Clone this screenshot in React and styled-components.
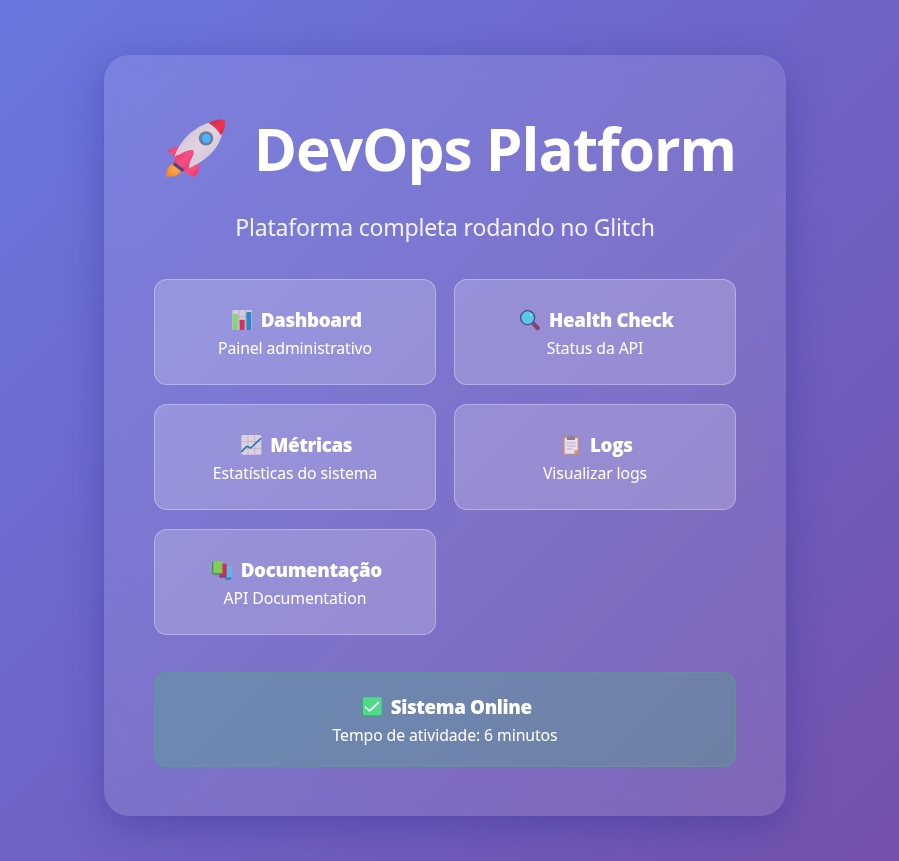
import React from 'react';
import styled, { createGlobalStyle } from 'styled-components';

const GlobalStyle = createGlobalStyle`
  * { box-sizing: border-box; margin: 0; padding: 0; }
  body {
    font-family: "Noto Sans", "Open Sans", sans-serif;
    color: #fff;
    overflow: hidden;
  }
`;

const Page = styled.div`
  min-height: 861px;
  padding: 55px 9px 45px 0;
  display: flex;
  justify-content: center;
  align-items: flex-start;
  background: linear-gradient(135deg, #6a77e0 0%, #7451ac 100%);
`;

const Panel = styled.main`
  width: 682px;
  height: 761px;
  padding: 50px;
  border-radius: 25px;
  background: rgba(255, 255, 255, 0.1);
  backdrop-filter: blur(12px);
  box-shadow: 0 10px 40px rgba(31, 38, 135, 0.37);
`;

const Heading = styled.h1`
  display: flex;
  align-items: center;
  justify-content: flex-end;
  gap: 27.5px;
  height: 86px;
  font-family: "Open Sans", sans-serif;
  font-size: 58.5px;
  line-height: 86px;
  font-weight: 750;
  letter-spacing: -1px;
  white-space: nowrap;
`;

const RocketSvg = styled.svg`
  width: 60px;
  height: 60px;
`;

const Subtitle = styled.p`
  margin: 20px 0 35px;
  font-size: 23px;
  line-height: 33px;
  letter-spacing: -0.2px;
  text-align: center;
  opacity: 0.9;
`;

const Grid = styled.nav`
  display: grid;
  grid-template-columns: 1fr 1fr;
  grid-auto-rows: 106px;
  gap: 19px 18px;
`;

const Tile = styled.a`
  padding-top: 27px;
  border-radius: 13px;
  background: rgba(255, 255, 255, 0.2);
  box-shadow: inset 0 0 0 1px rgba(255, 255, 255, 0.3);
  text-align: center;
`;

const Status = styled.section`
  height: 95px;
  margin-top: 37px;
  padding-top: 21px;
  border-radius: 13px;
  background: rgba(72, 187, 120, 0.3);
  box-shadow: inset 0 0 0 1px rgba(60, 180, 110, 0.5);
  text-align: center;
`;

const Label = styled.strong`
  display: flex;
  justify-content: center;
  align-items: center;
  gap: 7px;
  padding-left: 1.5px;
  font-family: "Open Sans", sans-serif;
  font-size: 18.75px;
  line-height: 28px;
  font-weight: 800;
  letter-spacing: -0.35px;
`;

const Detail = styled.span`
  display: block;
  font-size: 15.8px;
  line-height: 28px;
  letter-spacing: -0.11px;
`;

const IconSvg = styled.svg`
  width: 24px;
  height: 24px;
  flex: none;
`;

const Rocket = () => (
  <RocketSvg viewBox="48 40 180 180">
    <defs>
      <linearGradient id="hull" x1="0" y1="0" x2="1" y2="1">
        <stop offset="0" stopColor="#c8bdcc" />
        <stop offset=".5" stopColor="#e0d4e2" />
        <stop offset="1" stopColor="#cdbfd4" />
      </linearGradient>
      <linearGradient id="fin" x1="0" y1="0" x2="1" y2="1">
        <stop offset="0" stopColor="#e03a63" />
        <stop offset=".5" stopColor="#f54f85" />
        <stop offset="1" stopColor="#ee2f5f" />
      </linearGradient>
      <linearGradient id="tip" x1="0" y1="0" x2="1" y2="1">
        <stop offset="0" stopColor="#c92745" />
        <stop offset=".6" stopColor="#f03650" />
        <stop offset="1" stopColor="#d42040" />
      </linearGradient>
      <radialGradient id="flame">
        <stop offset="0" stopColor="#ffae4b" />
        <stop offset="1" stopColor="#ed8733" />
      </radialGradient>
    </defs>
    <path d="M70 176 C57 180 47 197 49 216 C54 219 59 217 62 213 C66 218 72 217 75 213 C88 211 96 202 96 192 Z" fill="url(#flame)" />
    <path d="M75 169 L106 192 L97 202 L69 180 Z" fill="#4b4384" />
    <path d="M90 124 C70 127 57 134 53 141 C60 148 70 151 76 157 Z" fill="url(#fin)" />
    <path d="M144 174 C153 186 145 204 134 217 C122 213 109 206 99 199 Z" fill="url(#fin)" />
    <path d="M177 54 C134 66 92 105 76 149 L74 165 L118 190 C164 170 207 134 216 88 Z" fill="url(#hull)" />
    <path d="M176 55 C194 45 215 42 225 47 C228 60 223 78 213 92 C204 77 192 63 176 55 Z" fill="url(#tip)" />
    <path d="M72 171 C73 160 77 149 86 151 C101 142 119 133 130 137 C136 148 120 166 118 180 C117 188 112 195 105 196 Z" fill="url(#fin)" />
    <circle cx="168" cy="101" r="21.5" fill="#777889" />
    <circle cx="168" cy="101" r="16" fill="#3d8fe9" />
    <circle cx="169" cy="101" r="13" fill="#55b1ff" />
  </RocketSvg>
);

const BarChart = () => (
  <IconSvg viewBox="27 24 72 72">
    <rect x="34" y="30" width="59" height="60" rx="4" fill="#d5cad9" />
    <path d="M34 50H93M34 70H93M54 30V90M74 30V90" stroke="#b1a3bd" strokeWidth="2" />
    <rect x="36" y="42" width="14" height="48" rx="2" fill="#7fda70" />
    <rect x="56" y="59" width="15" height="31" rx="2" fill="#d0315f" />
    <rect x="76" y="36" width="15" height="54" rx="2" fill="#2b87c8" />
  </IconSvg>
);

const Magnifier = () => (
  <IconSvg viewBox="26 24 72 72">
    <path d="M66 66L75 74" stroke="#564577" strokeWidth="7" />
    <path d="M74 73L85 84" stroke="#86436f" strokeWidth="13" strokeLinecap="round" />
    <circle cx="55" cy="53" r="21" fill="#58c9e5" stroke="#514b80" strokeWidth="4" />
    <circle cx="65" cy="44" r="3" fill="#a4e8f4" />
  </IconSvg>
);

const LineChart = () => (
  <IconSvg viewBox="120 24 72 72">
    <rect x="127" y="30" width="60" height="59" rx="4" fill="#ddd2df" />
    <path d="M127 50H187M127 70H187M147 30V89M167 30V89" stroke="#b5a8c0" strokeWidth="2" />
    <path d="M128 80L143 64L155 69L185 41" fill="none" stroke="#2978b4" strokeWidth="5" strokeLinejoin="round" strokeLinecap="round" />
  </IconSvg>
);

const Clipboard = () => (
  <IconSvg viewBox="72 24 72 72">
    <rect x="84" y="33" width="48" height="57" rx="4" fill="#c98a78" />
    <path d="M89 39H128V75L118 86H89Z" fill="#e9dfec" />
    <path d="M128 75L118 86V75Z" fill="#c7a5af" />
    <path d="M118 87L129 75V87Z" fill="#e58a4b" />
    <path d="M95 54H122M95 63H122M95 72H113" stroke="#b9adc7" strokeWidth="3" />
    <path d="M96 35H103Q108 25 113 35H120V45H96Z" fill="#88809b" />
  </IconSvg>
);

const Books = () => (
  <IconSvg viewBox="30 24 72 72">
    <path d="M78 48H96V86H78Z" fill="#5cb9e6" />
    <path d="M76 82H94V89H76Z" fill="#357ebd" />
    <path d="M62 41H80V80H62Z" fill="#cf2e5d" />
    <path d="M56 76H78V83H58Z" fill="#8d3f73" />
    <path d="M36 36L41 34V74L36 69Z" fill="#438b52" />
    <path d="M40 34H67V70H40Z" fill="#80ce54" />
    <path d="M38 70H67V74H41Z" fill="#478560" />
  </IconSvg>
);

const CheckBox = () => (
  <IconSvg viewBox="106 15 72 72">
    <rect x="112" y="22" width="59" height="57" rx="5" fill="#35ad69" />
    <rect x="115" y="22" width="56" height="54" rx="4" fill="#50d98a" />
    <path d="M122 51L135 63L161 38" fill="none" stroke="#fff" strokeWidth="5" strokeLinecap="round" strokeLinejoin="round" />
  </IconSvg>
);

const links = [
  { icon: BarChart, label: 'Dashboard', detail: 'Painel administrativo' },
  { icon: Magnifier, label: 'Health Check', detail: 'Status da API' },
  { icon: LineChart, label: 'Métricas', detail: 'Estatísticas do sistema' },
  { icon: Clipboard, label: 'Logs', detail: 'Visualizar logs' },
  { icon: Books, label: 'Documentação', detail: 'API Documentation' },
];

export default function App() {
  return (
    <Page>
      <GlobalStyle />
      <Panel>
        <Heading><Rocket />DevOps Platform</Heading>
        <Subtitle>Plataforma completa rodando no Glitch</Subtitle>
        <Grid>
          {links.map(({ icon: Icon, label, detail }) => (
            <Tile key={label}>
              <Label><Icon />{label}</Label>
              <Detail>{detail}</Detail>
            </Tile>
          ))}
        </Grid>
        <Status>
          <Label><CheckBox />Sistema Online</Label>
          <Detail>Tempo de atividade: 6 minutos</Detail>
        </Status>
      </Panel>
    </Page>
  );
}
